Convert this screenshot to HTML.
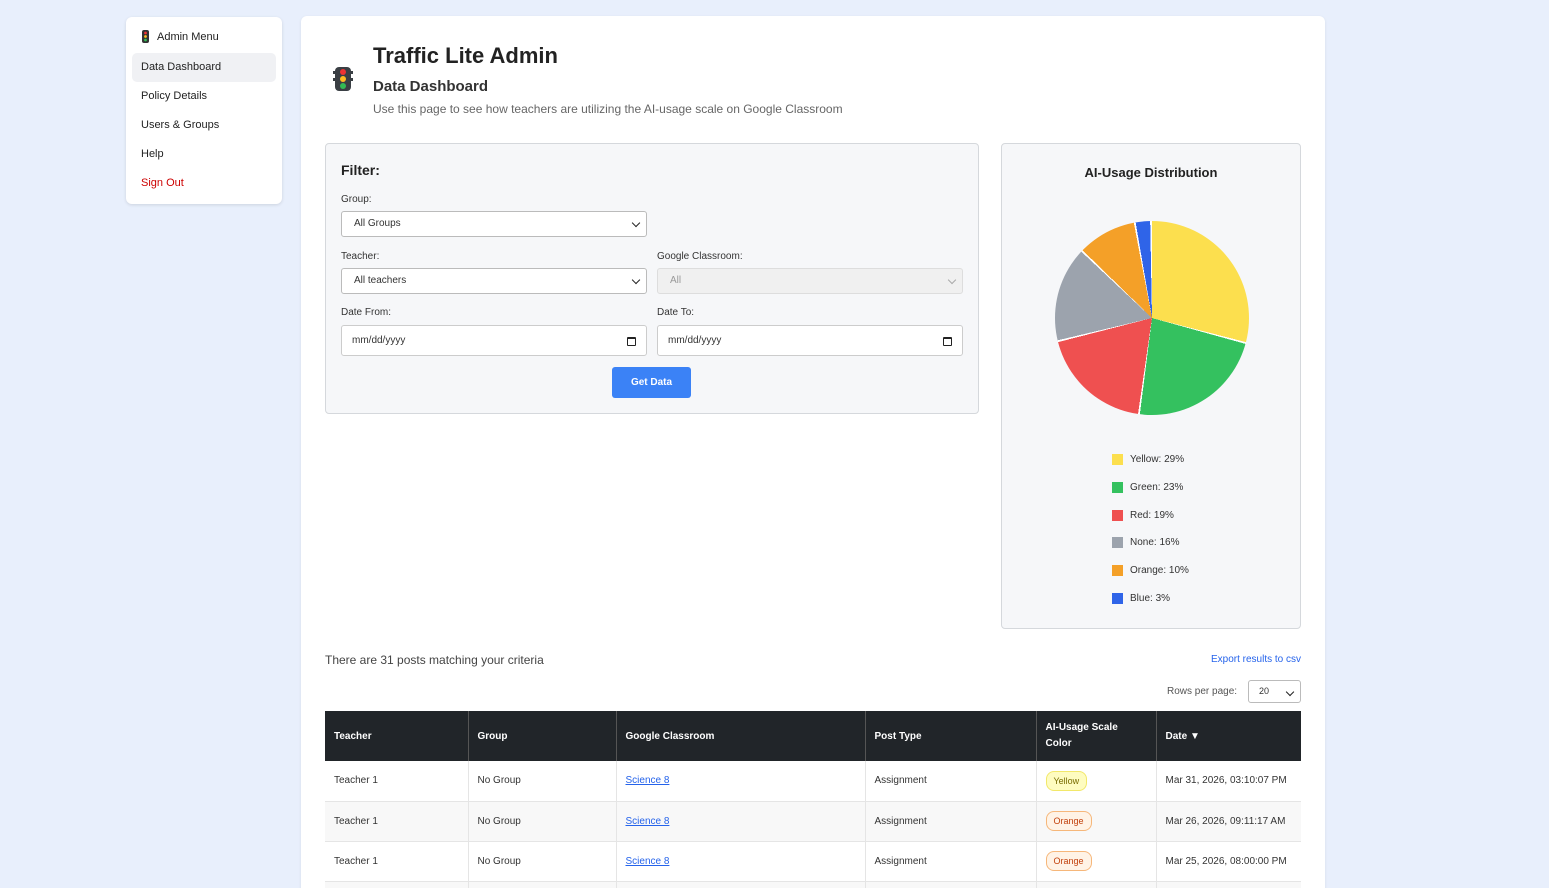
<!DOCTYPE html>
<html><head><style>
*{box-sizing:border-box;margin:0;padding:0}
html,body{width:1549px;height:888px;overflow:hidden}
body{background:#e8effc;font-family:"Liberation Sans",sans-serif;color:#222;position:relative}
.side{position:absolute;left:126px;top:17px;width:156px;height:187px;background:#fff;border-radius:6px;box-shadow:0 1px 3px rgba(0,0,0,.12);font-size:11px}
.side .h{position:absolute;left:16px;top:13px;display:flex;align-items:center;gap:8px}
.side .it{position:absolute;left:6px;width:144px;height:29px;line-height:29px;padding-left:9px;border-radius:5px}
.main{position:absolute;left:301px;top:16px;width:1024px;height:900px;background:#fff;border-radius:6px;box-shadow:0 1px 3px rgba(0,0,0,.08)}
.abs{position:absolute}
.lbl{font-size:10px;color:#333}
.sel{position:absolute;height:26px;border:1px solid #bbb;border-radius:3px;background:#fff;font-size:10px;padding-left:12px;line-height:24px;color:#333}
.sel:after{content:"";position:absolute;right:7px;top:8px;width:5px;height:5px;border-right:1.5px solid #222;border-bottom:1.5px solid #222;transform:rotate(45deg)}
.sel.dis{background:#f0f0f0;border-color:#ddd;color:#999}
.sel.dis:after{border-color:#aaa}
.date{position:absolute;height:31px;border:1px solid #ccc;border-radius:3px;background:#fff;font-size:10px;padding-left:10px;line-height:30px;color:#333}
.date:after{content:"";position:absolute;right:10px;top:11px;width:7px;height:6px;border:1.5px solid #222;border-top-width:2.5px;border-radius:1px}
table{position:absolute;left:24px;top:695px;width:976px;border-collapse:collapse;font-size:10px}
th{background:#212529;color:#fff;text-align:left;height:50px;padding:0 9px;font-weight:bold;border-left:1px solid #555}
td{height:40px;padding:0 9px;border-left:1px solid #e5e5e5;border-bottom:1px solid #e5e5e5;color:#333}
tr:nth-child(odd) td{background:#f8f8f8}
a{color:#2563eb;text-decoration:underline}
.b{display:inline-block;padding:4px 7px;border-radius:8px;font-size:9px}
.leg{position:absolute;left:811px;font-size:10px;color:#333;display:flex;align-items:center;gap:7px;white-space:nowrap}
.leg i{width:11px;height:11px;display:inline-block}
</style></head><body>
<div class="side">
 <div class="h"><svg width="7" height="13"><rect width="7" height="13" rx="2" fill="#333"/><circle cx="3.5" cy="3" r="1.4" fill="#e33"/><circle cx="3.5" cy="6.5" r="1.4" fill="#fb2"/><circle cx="3.5" cy="10" r="1.4" fill="#3b5"/></svg><span>Admin Menu</span></div>
 <div class="it" style="top:36px;background:#f0f1f4">Data Dashboard</div>
 <div class="it" style="top:65px">Policy Details</div>
 <div class="it" style="top:94px">Users &amp; Groups</div>
 <div class="it" style="top:123px">Help</div>
 <div class="it" style="top:152px;color:#c00">Sign Out</div>
</div>
<div class="main">
 <svg class="abs" style="left:32px;top:50px" width="20" height="26"><rect x="2" y="1" width="16" height="24" rx="4" fill="#3a3f44"/><rect x="0" y="5" width="3" height="3" fill="#3a3f44"/><rect x="17" y="5" width="3" height="3" fill="#3a3f44"/><rect x="0" y="12" width="3" height="3" fill="#3a3f44"/><rect x="17" y="12" width="3" height="3" fill="#3a3f44"/><circle cx="10" cy="6" r="3" fill="#e33"/><circle cx="10" cy="13" r="3" fill="#fb2"/><circle cx="10" cy="20" r="3" fill="#3b5"/></svg>
 <div class="abs" style="left:72px;top:27px;font-size:22px;font-weight:bold;color:#222">Traffic Lite Admin</div>
 <div class="abs" style="left:72px;top:62px;font-size:15px;font-weight:bold;color:#333">Data Dashboard</div>
 <div class="abs" style="left:72px;top:86px;font-size:12px;color:#666">Use this page to see how teachers are utilizing the AI-usage scale on Google Classroom</div>

 <div class="abs" style="left:24px;top:127px;width:654px;height:271px;background:#f6f7f9;border:1px solid #d5d8dc;border-radius:4px">
  <div class="abs" style="left:15px;top:18px;font-size:14px;font-weight:bold">Filter:</div>
  <div class="abs lbl" style="left:15px;top:50px">Group:</div>
  <div class="sel" style="left:15px;top:67px;width:306px">All Groups</div>
  <div class="abs lbl" style="left:15px;top:107px">Teacher:</div>
  <div class="sel" style="left:15px;top:124px;width:306px">All teachers</div>
  <div class="abs lbl" style="left:331px;top:107px">Google Classroom:</div>
  <div class="sel dis" style="left:331px;top:124px;width:306px">All</div>
  <div class="abs lbl" style="left:15px;top:163px">Date From:</div>
  <div class="date" style="left:15px;top:181px;width:306px">mm/dd/yyyy</div>
  <div class="abs lbl" style="left:331px;top:163px">Date To:</div>
  <div class="date" style="left:331px;top:181px;width:306px">mm/dd/yyyy</div>
  <div class="abs" style="left:286px;top:223px;width:79px;height:31px;background:#3b82f6;color:#fff;border-radius:3px;font-size:10px;font-weight:bold;text-align:center;line-height:31px">Get Data</div>
 </div>

 <div class="abs" style="left:700px;top:127px;width:300px;height:486px;background:#f6f7f9;border:1px solid #d5d8dc;border-radius:4px">
  <div class="abs" style="left:0;width:298px;top:21px;text-align:center;font-size:13px;font-weight:bold">AI-Usage Distribution</div>
  <div class="abs" style="left:53px;top:77px;width:194px;height:194px;border-radius:50%;background:conic-gradient(#fcdf4e 0 29%,#fff 29% 29.3%,#34c15f 29.3% 52%,#fff 52% 52.3%,#ef5050 52.3% 71%,#fff 71% 71.3%,#9ca3ad 71.3% 87%,#fff 87% 87.3%,#f4a028 87.3% 97%,#fff 97% 97.3%,#2f64e8 97.3% 99.7%,#fff 99.7%)"></div>
 </div>
 <div class="leg" style="top:438px"><i style="background:#fcdf4e"></i>Yellow: 29%</div>
 <div class="leg" style="top:466px"><i style="background:#34c15f"></i>Green: 23%</div>
 <div class="leg" style="top:494px"><i style="background:#ef5050"></i>Red: 19%</div>
 <div class="leg" style="top:521px"><i style="background:#9ca3ad"></i>None: 16%</div>
 <div class="leg" style="top:549px"><i style="background:#f4a028"></i>Orange: 10%</div>
 <div class="leg" style="top:577px"><i style="background:#2f64e8"></i>Blue: 3%</div>

 <div class="abs" style="left:24px;top:637px;font-size:12px;color:#444">There are 31 posts matching your criteria</div>
 <div class="abs" style="right:24px;top:638px;font-size:10px;color:#2563eb">Export results to csv</div>
 <div class="abs" style="left:866px;top:670px;font-size:10px;color:#555">Rows per page:</div>
 <div class="sel" style="left:947px;top:664px;width:53px;height:23px;line-height:21px;padding-left:10px;font-size:9px">20</div>

 <table>
  <tr><th style="width:143px;border-left:none">Teacher</th><th style="width:148px">Group</th><th style="width:249px">Google Classroom</th><th style="width:171px">Post Type</th><th style="width:120px;line-height:16px">AI-Usage Scale<br>Color</th><th>Date ▼</th></tr>
  <tr><td style="border-left:none;background:#fff">Teacher 1</td><td style="background:#fff">No Group</td><td style="background:#fff"><a>Science 8</a></td><td style="background:#fff">Assignment</td><td style="background:#fff"><span class="b" style="background:#fefcc0;border:1px solid #f2e86a;color:#776b00">Yellow</span></td><td style="background:#fff">Mar 31, 2026, 03:10:07 PM</td></tr>
  <tr><td style="border-left:none">Teacher 1</td><td>No Group</td><td><a>Science 8</a></td><td>Assignment</td><td><span class="b" style="background:#fff3e6;border:1px solid #f6b77a;color:#c2410c">Orange</span></td><td>Mar 26, 2026, 09:11:17 AM</td></tr>
  <tr><td style="border-left:none;background:#fff">Teacher 1</td><td style="background:#fff">No Group</td><td style="background:#fff"><a>Science 8</a></td><td style="background:#fff">Assignment</td><td style="background:#fff"><span class="b" style="background:#fff3e6;border:1px solid #f6b77a;color:#c2410c">Orange</span></td><td style="background:#fff">Mar 25, 2026, 08:00:00 PM</td></tr>
  <tr><td style="border-left:none">Teacher 1</td><td>No Group</td><td><a>Science 8</a></td><td>Assignment</td><td></td><td></td></tr>
 </table>
</div>
</body></html>
